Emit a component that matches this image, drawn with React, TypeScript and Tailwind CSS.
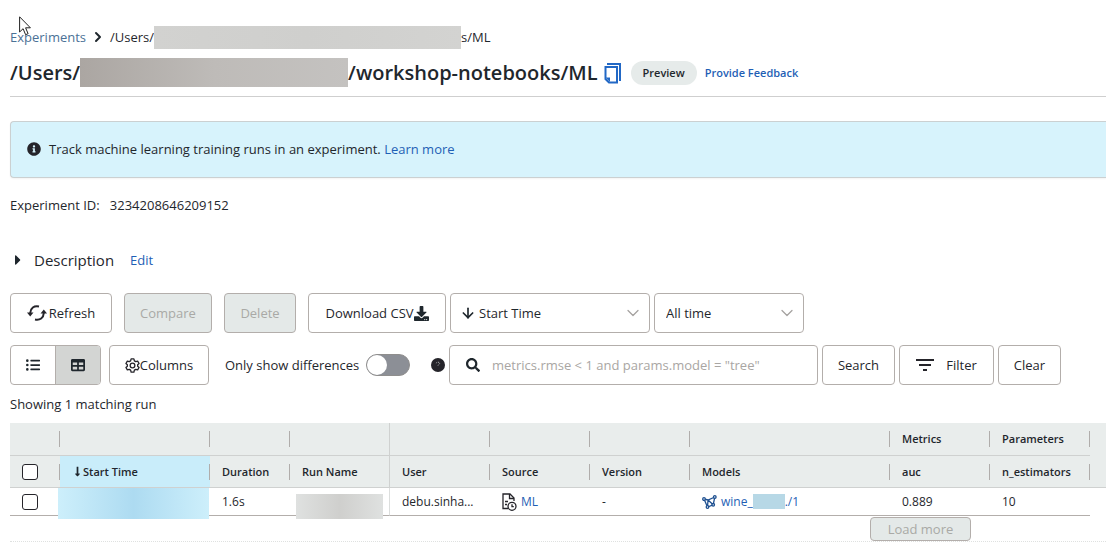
import type { ReactNode } from "react";
import { FaDownload, FaSearch, FaListUl, FaTable, FaLongArrowAltDown, FaInfoCircle, FaCaretRight } from "react-icons/fa";
import { ArrowDown, ChevronDown, ChevronRight } from "lucide-react";

const box = "flex h-10 shrink-0 items-center justify-center rounded border border-[#b3aeab] bg-white text-[#1f272d]";
const disabledBox = "flex h-10 shrink-0 items-center justify-center rounded border border-[#b3aeab] bg-[#e4e9e8] text-[#a9a9a6]";

function Cursor() {
  return (
    <svg aria-hidden="true" viewBox="0 0 12 20" className="absolute left-[19px] top-4 h-5 w-3">
      <path d="M.6 .8V16l3.5-3.3 2.5 6 2.5-1-2.5-5.9h4.8z" fill="#fff" stroke="#222" strokeWidth="1" />
    </svg>
  );
}

function CopyIcon() {
  return (
    <svg aria-hidden="true" viewBox="0 0 18 22" className="h-[22px] w-[18px]" fill="none" stroke="#2268c5" strokeWidth="2">
      <path d="M3 2h13v17" />
      <path d="M1.500 5h11.500v15.500H5l-3.500-3.500z" />
      <path d="M1.500 15.500H6V20z" fill="#2268c5" stroke="none" />
    </svg>
  );
}

function RefreshIcon() {
  return (
    <svg aria-hidden="true" viewBox="0 0 20 16" className="h-4 w-5" fill="none" stroke="#25242a" strokeWidth="2">
      <path d="M12 1.500C7 .5 3.500 3 3.200 8" />
      <path d="M8 14.500c5 1 8.500-1.500 8.800-6.500" />
      <path d="M0 7.500h6.500L3.200 11.500z" fill="#25242a" stroke="none" />
      <path d="M13.500 8.500H20L16.800 4.500z" fill="#25242a" stroke="none" />
    </svg>
  );
}

function GearIcon() {
  return (
    <svg aria-hidden="true" viewBox="0 0 16 16" className="h-[15px] w-[15px]" fill="none" stroke="#25242a" strokeWidth="1.4" strokeLinejoin="round">
      <path d="M6.500 1h3l.5 2 1.500.9 2-.6L15 5.900l-1.500 1.400v1.400L15 10.100l-1.500 2.600-2-.6-1.500.9-.5 2h-3L6 13l-1.500-.9-2 .6L1 10.100l1.500-1.400V7.300L1 5.900l1.500-2.600 2 .6L6 3z" />
      <circle cx="8" cy="8" r="2.500" />
    </svg>
  );
}

function HelpIcon() {
  return (
    <svg aria-hidden="true" viewBox="0 0 14 14" className="ml-[21px] size-[14px] shrink-0">
      <circle cx="7" cy="7" r="7" fill="#25242a" />
      <path d="M5.300 5.200c.3-1.500 3.300-1.400 3.300.2 0 1-1.500 1.100-1.600 2.200" fill="none" stroke="#b9b9bb" strokeWidth=".9" strokeDasharray="1.200 .8" />
    </svg>
  );
}

function FilterIcon() {
  return (
    <svg aria-hidden="true" viewBox="0 0 18 12" className="h-3 w-[18px]" fill="#25242a">
      <path d="M0 0h18v2H0zM3 5h12v2H3zM7 10h4v2H7z" />
    </svg>
  );
}

function NotebookIcon() {
  return (
    <svg aria-hidden="true" viewBox="0 0 15 18" className="h-[18px] w-[15px]" fill="none" stroke="#25242a" strokeWidth="1.300">
      <path d="M6 15.500H1V1h7l4 4v3" />
      <path d="M7.500 1v4.500H12" />
      <path d="M3 8.500h3M3 11.500h2" />
      <circle cx="10" cy="13.300" r="4" fill="#fff" />
      <path d="M10 11.300v2.300h1.800" />
    </svg>
  );
}

function ModelIcon() {
  return (
    <svg aria-hidden="true" viewBox="0 0 15 14" className="h-[14px] w-[15px]" fill="none" stroke="#1d4f90" strokeWidth="1.300">
      <path d="M2 4l4 1 6.800-3L11.200 9.800 5.500 12 6 5M2 4l3.500 8M6 5l5.200 4.800" />
      <g fill="#fff">
        <circle cx="2" cy="4" r="1.300" />
        <circle cx="12.800" cy="2" r="1.300" />
        <circle cx="11.200" cy="9.800" r="1.300" />
        <circle cx="5.500" cy="12" r="1.300" />
      </g>
    </svg>
  );
}

function HeadCell({ children, full, sorted }: { children?: ReactNode; full?: boolean; sorted?: boolean }) {
  return (
    <th
      scope="col"
      className={`border-b border-b-[#cfd1d0] p-0 text-left font-semibold ${full ? "border-r border-r-[#cfd1d0]" : ""} ${sorted ? "bg-[#c9edfa]" : ""}`}
    >
      <div className="flex items-center justify-between pl-3">
        <span className="flex items-center whitespace-nowrap">{children}</span>
        {!full && <span className="h-4 w-px bg-[#b0adab]" />}
      </div>
    </th>
  );
}

function Check({ label }: { label: string }) {
  return <input type="checkbox" aria-label={label} className="block size-4 appearance-none rounded-[3px] border border-[#25242a] bg-white checked:bg-[#2268c5]" />;
}

function Link({ children }: { children: ReactNode }) {
  return <a href="#" className="text-[#1f5fb5]">{children}</a>;
}

const cell = "h-7 border-b border-[#b3aeab] p-0 pl-3";

export default function App() {
  return (
    <main className="relative overflow-hidden bg-white pl-[10px] pt-[27px] font-['Open_Sans','Noto_Sans',sans-serif] text-[13px] leading-5 text-[#1f272d]">
      <nav aria-label="Breadcrumb" className="flex h-5 items-center whitespace-nowrap">
        <a href="#" className="text-[#4b7196]">Experiments</a>
        <ChevronRight className="mx-1 size-4" strokeWidth={3} />
        <span>/Users/</span>
        <span className="-my-1 h-[23px] w-[307px] bg-linear-to-r from-[#d2d2d0] via-[#cfcfcd] to-[#d3d3d1]" />
        <span>s/ML</span>
      </nav>
      <Cursor />
      <header className="flex h-[50px] items-center border-b border-[#cfcfcf] pt-[2px] whitespace-nowrap">
        <h1 className="flex items-center text-[20px] font-semibold leading-7">
          <span>/Users/</span>
          <span className="h-[29px] w-[268px] bg-linear-to-r from-[#aba6a2] via-[#bebbb8] to-[#c4c2c0]" />
          <span>/workshop-notebooks/ML</span>
        </h1>
        <button type="button" aria-label="Copy path" className="ml-[6px]"><CopyIcon /></button>
        <span className="ml-[9px] rounded-full bg-[#e6ebea] px-3 py-[2px] text-[11px] font-semibold">Preview</span>
        <a href="#" className="ml-2 text-[11px] font-semibold text-[#1f5fb5]">Provide Feedback</a>
      </header>

      <section className="mt-6 flex h-[57px] items-center rounded-l border border-r-0 border-[#cbd0d1] bg-[#d7f3fc] pb-[2px] pl-4 shadow-xs">
        <FaInfoCircle className="mr-2 size-[14px] text-[#25242a]" />
        <p>Track machine learning training runs in an experiment. <Link>Learn more</Link></p>
      </section>

      <p className="mt-[17px]">Experiment ID:&nbsp;&nbsp; 3234208646209152</p>

      <div className="mt-[35px] flex h-5 items-center">
        <button type="button" className="flex items-center text-[15px]">
          <FaCaretRight className="mr-2 size-4" />
          Description
        </button>
        <span className="ml-4"><Link>Edit</Link></span>
      </div>

      <div className="mt-[23px] flex">
        <button type="button" className={`${box} w-[102px] gap-[2px]`}><RefreshIcon />Refresh</button>
        <button type="button" disabled className={`${disabledBox} ml-3 w-[88px]`}>Compare</button>
        <button type="button" disabled className={`${disabledBox} ml-3 w-[72px]`}>Delete</button>
        <button type="button" className={`${box} ml-3 w-[138px]`}>Download CSV<FaDownload className="size-[15px]" /></button>
        <div className="relative ml-1 w-[200px]">
          <select aria-label="Sort by" className="h-10 w-full appearance-none rounded border border-[#b3aeab] bg-white pl-7">
            <option>Start Time</option>
          </select>
          <ArrowDown className="pointer-events-none absolute left-[10px] top-3 size-4" strokeWidth={2.5} />
          <ChevronDown className="pointer-events-none absolute right-[7px] top-[10px] size-5 text-[#a5a2a0]" strokeWidth={1.5} />
        </div>
        <div className="relative ml-1 w-[150px]">
          <select aria-label="Time range" className="h-10 w-full appearance-none rounded border border-[#b3aeab] bg-white pl-[11px]">
            <option>All time</option>
          </select>
          <ChevronDown className="pointer-events-none absolute right-[7px] top-[10px] size-5 text-[#a5a2a0]" strokeWidth={1.5} />
        </div>
      </div>

      <div className="mt-3 flex items-center pr-[45px]">
        <div className="flex h-10 w-[91px] shrink-0 overflow-hidden rounded border border-[#b3aeab]">
          <button type="button" aria-label="List view" className="flex flex-1 items-center justify-center"><FaListUl className="size-[14px]" /></button>
          <button type="button" aria-label="Table view" aria-pressed="true" className="flex flex-1 items-center justify-center border-l border-[#b3aeab] bg-[#d3d5d3]"><FaTable className="size-[14px]" /></button>
        </div>
        <button type="button" className={`${box} ml-2 w-[100px]`}><GearIcon />Columns</button>
        <label htmlFor="differences" className="ml-4 w-[141px] shrink-0 whitespace-nowrap">Only show differences</label>
        <input
          id="differences"
          type="checkbox"
          role="switch"
          className="flex h-[22px] w-11 shrink-0 appearance-none items-center rounded-full border border-[#8f8e8d] bg-[#8c8f96] before:block before:size-5 before:rounded-full before:bg-white checked:justify-end checked:bg-[#2268c5]"
        />
        <HelpIcon />
        <div className="ml-1 flex h-10 min-w-0 flex-1 items-center rounded border border-[#b3aeab]">
          <FaSearch className="ml-4 size-[14px] shrink-0" />
          <input type="search" aria-label="Search runs" placeholder={'metrics.rmse < 1 and params.model = "tree"'} className="ml-3 min-w-0 flex-1 outline-none placeholder:text-[#a9a6a3]" />
        </div>
        <button type="button" className={`${box} ml-1 w-[73px]`}>Search</button>
        <button type="button" className={`${box} ml-1 w-[95px] gap-3`}><FilterIcon />Filter</button>
        <button type="button" className={`${box} ml-1 w-[63px]`}>Clear</button>
      </div>

      <p className="mt-[9px]">Showing 1 matching run</p>

      <table className="mt-[9px] w-full table-fixed border-separate border-spacing-0 text-[12px] leading-4">
        <colgroup>
          <col className="w-[50px]" />
          <col className="w-[150px]" />
          <col className="w-20" />
          <col className="w-[100px]" />
          <col className="w-[100px]" />
          <col className="w-[100px]" />
          <col className="w-[100px]" />
          <col className="w-[200px]" />
          <col className="w-[100px]" />
          <col className="w-[100px]" />
          <col />
        </colgroup>
        <thead className="bg-[#e9edec] text-[11px]">
          <tr className="h-[33px]">
            <HeadCell /><HeadCell /><HeadCell /><HeadCell full /><HeadCell /><HeadCell /><HeadCell /><HeadCell />
            <HeadCell>Metrics</HeadCell>
            <HeadCell>Parameters</HeadCell>
            <td />
          </tr>
          <tr className="h-8">
            <HeadCell><Check label="Select all runs" /></HeadCell>
            <HeadCell sorted><FaLongArrowAltDown className="size-[11px]" />Start Time</HeadCell>
            <HeadCell>Duration</HeadCell>
            <HeadCell full>Run Name</HeadCell>
            <HeadCell>User</HeadCell>
            <HeadCell>Source</HeadCell>
            <HeadCell>Version</HeadCell>
            <HeadCell>Models</HeadCell>
            <HeadCell>auc</HeadCell>
            <HeadCell>n_estimators</HeadCell>
            <td className="border-b border-[#cfd1d0]" />
          </tr>
        </thead>
        <tbody>
          <tr>
            <td className={cell}><Check label="Select run" /></td>
            <td className={`${cell} relative`}>
              <span className="absolute -left-[2px] top-0 h-[31px] w-[151px] bg-linear-to-r from-[#cdeffb] via-[#addbf1] to-[#cdeffb]" />
            </td>
            <td className={cell}>1.6s</td>
            <td className={`${cell} relative border-r border-r-[#dcdedd]`}>
              <span className="absolute left-[6px] top-[6px] h-[25px] w-[87px] bg-linear-to-r from-[#dfe1e0] via-[#cfcfcd] to-[#dfe1e0]" />
            </td>
            <td className={cell}>debu.sinha...</td>
            <td className={cell}><span className="flex items-center gap-1"><NotebookIcon /><Link>ML</Link></span></td>
            <td className={cell}>-</td>
            <td className={cell}>
              <span className="flex items-center">
                <ModelIcon />
                <a href="#" className="ml-1 flex items-center text-[#1f5fb5]">
                  wine_<span className="h-[15px] w-8 bg-[#b7d8e6]" />./1
                </a>
              </span>
            </td>
            <td className={cell}>0.889</td>
            <td className={cell}>10</td>
            <td />
          </tr>
        </tbody>
      </table>
      <div className="flex justify-end border-b border-dotted border-[#dfe1e0] pr-[135px] pt-px">
        <button type="button" disabled className="h-6 w-[101px] rounded border border-[#b3aeab] bg-[#e4e9e8] text-[#a9a9a6]">Load more</button>
      </div>
    </main>
  );
}
